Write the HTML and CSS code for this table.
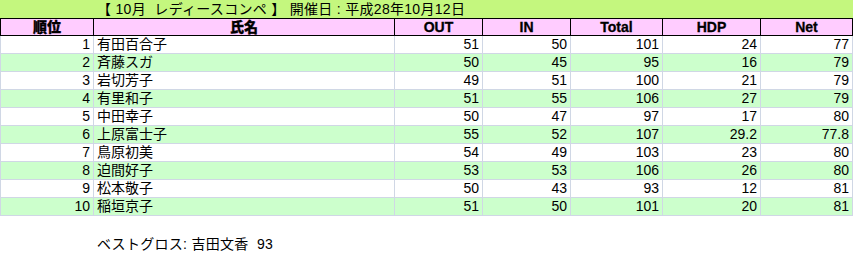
FILE: index.html
```html
<!DOCTYPE html>
<html lang="ja">
<head>
<meta charset="utf-8">
<link rel="stylesheet" href="styles.css">
</head>
<body>
<div class="title"><span class="title-text">【 10月&nbsp; レディースコンペ 】 開催日 : 平成28年10月12日</span></div>
<table class="score">
<colgroup>
<col class="c-rank"><col class="c-name"><col class="c-num"><col class="c-num"><col class="c-total"><col class="c-hdp"><col class="c-net">
</colgroup>
<thead>
<tr><th>順位</th><th>氏名</th><th>OUT</th><th>IN</th><th>Total</th><th>HDP</th><th>Net</th></tr>
</thead>
<tbody>
<tr><td>1</td><td class="name">有田百合子</td><td>51</td><td>50</td><td>101</td><td>24</td><td>77</td></tr>
<tr class="alt"><td>2</td><td class="name">斉藤スガ</td><td>50</td><td>45</td><td>95</td><td>16</td><td>79</td></tr>
<tr><td>3</td><td class="name">岩切芳子</td><td>49</td><td>51</td><td>100</td><td>21</td><td>79</td></tr>
<tr class="alt"><td>4</td><td class="name">有里和子</td><td>51</td><td>55</td><td>106</td><td>27</td><td>79</td></tr>
<tr><td>5</td><td class="name">中田幸子</td><td>50</td><td>47</td><td>97</td><td>17</td><td>80</td></tr>
<tr class="alt"><td>6</td><td class="name">上原富士子</td><td>55</td><td>52</td><td>107</td><td>29.2</td><td>77.8</td></tr>
<tr><td>7</td><td class="name">鳥原初美</td><td>54</td><td>49</td><td>103</td><td>23</td><td>80</td></tr>
<tr class="alt"><td>8</td><td class="name">迫間好子</td><td>53</td><td>53</td><td>106</td><td>26</td><td>80</td></tr>
<tr><td>9</td><td class="name">松本敬子</td><td>50</td><td>43</td><td>93</td><td>12</td><td>81</td></tr>
<tr class="alt"><td>10</td><td class="name">稲垣京子</td><td>51</td><td>50</td><td>101</td><td>20</td><td>81</td></tr>
</tbody>
</table>
<div class="footer">ベストグロス: 吉田文香&nbsp; 93</div>
</body>
</html>
```
FILE: styles.css
```css
html, body {
  margin: 0;
  padding: 0;
  background: #ffffff;
}
body {
  font-family: "Liberation Sans", "Noto Sans CJK JP", sans-serif;
  font-size: 14px;
  color: #000;
  width: 855px;
}
.title {
  height: 18px;
  width: 853px;
  background: #c4f77e;
  display: flex;
  align-items: center;
  padding-left: 97px;
  box-sizing: border-box;
  line-height: 18px;
}
.title-text {
  font-size: 14px;
  letter-spacing: 0.3px;
  white-space: pre;
}
.score {
  border-collapse: collapse;
  table-layout: fixed;
  width: 852px;
}
.c-rank { width: 93px; }
.c-name { width: 301px; }
.c-num { width: 88px; }
.c-total { width: 92px; }
.c-hdp { width: 98px; }
.c-net { width: 92px; }
.score th {
  background: #ffccff;
  border: 1px solid #000;
  height: 16px;
  padding: 0;
  font-weight: 900;
  font-size: 14px;
  line-height: 16px;
  text-align: center;
  -webkit-text-stroke: 0.3px #000;
}
.score td {
  height: 17px;
  padding: 0 3px 0 0;
  border: 1px solid #d0d7e5;
  border-top: none;
  text-align: right;
  line-height: 17px;
  font-size: 14px;
  white-space: nowrap;
  overflow: hidden;
}
.score td.name {
  text-align: left;
  padding: 0 0 0 3px;
}
.score tr.alt td {
  background: #ccffcc;
}
.footer {
  padding-left: 97px;
  margin-top: 19px;
  font-size: 14px;
  line-height: 18px;
  letter-spacing: 0.3px;
}
```
